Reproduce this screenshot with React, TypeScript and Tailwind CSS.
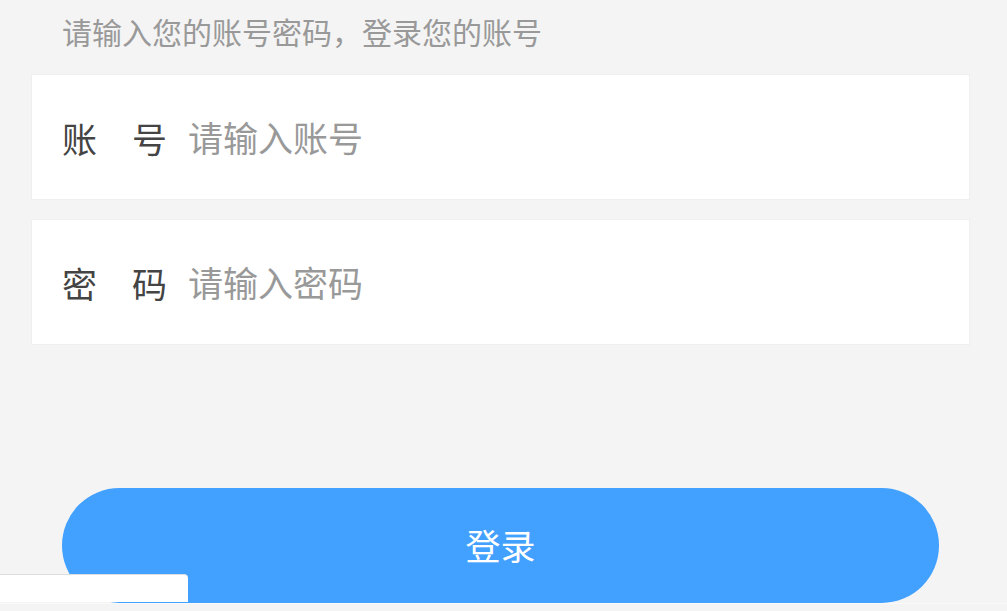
import React, { useState } from 'react';

const font = { fontFamily: '"Noto Sans CJK SC", "Noto Sans", sans-serif' };

interface FieldProps {
  label: string;
  placeholder: string;
  type?: string;
  value: string;
  onChange: (v: string) => void;
}

const Field: React.FC<FieldProps> = ({ label, placeholder, type = 'text', value, onChange }) => (
  <div className="ml-[31px] flex h-[126px] w-[939px] items-center border border-[#efefef] bg-white pl-[30px]">
    <span className="w-[105px] shrink-0 text-[35px] leading-[35px] text-[#444444]">{label}</span>
    <input
      type={type}
      value={value}
      placeholder={placeholder}
      onChange={(e) => onChange(e.target.value)}
      className="ml-[21px] flex-1 bg-transparent text-[35px] leading-[40px] text-[#333] outline-none placeholder:text-[#999999]"
      style={font}
    />
  </div>
);

export default function App() {
  const [account, setAccount] = useState('');
  const [password, setPassword] = useState('');

  return (
    <div className="relative h-[611px] w-full overflow-hidden bg-[#f4f4f4]" style={font}>
      <div className="pl-[62px] pt-[16px] text-[30px] leading-[30px] text-[#999999]">
        请输入您的账号密码，登录您的账号
      </div>

      <div className="mt-[28px] flex flex-col gap-[19px]">
        <Field label="账　号" placeholder="请输入账号" value={account} onChange={setAccount} />
        <Field label="密　码" placeholder="请输入密码" type="password" value={password} onChange={setPassword} />
      </div>

      <button
        className="mx-[62px] mt-[143px] flex h-[115px] w-[877px] items-center justify-center rounded-full bg-[#42a0ff] text-[35px] text-white"
        style={font}
      >
        登录
      </button>
      <div className="h-px bg-[#fafafa]" />

      <div className="absolute bottom-[9px] left-0 h-[28px] w-[188px] rounded-tr-[4px] border-t border-[#dddddd] bg-white" />
    </div>
  );
}
